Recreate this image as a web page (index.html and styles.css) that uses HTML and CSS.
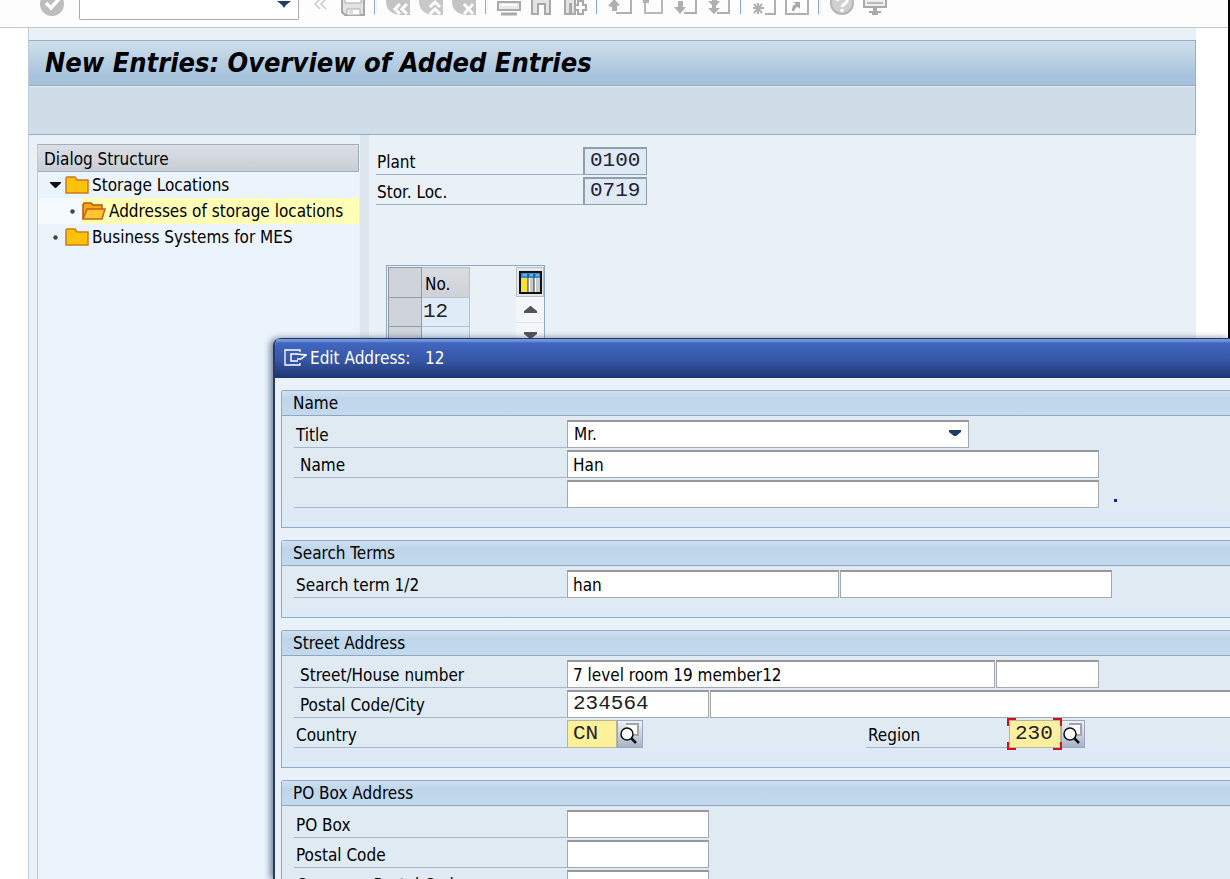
FILE: index.html
```html
<!DOCTYPE html>
<html lang="en">
<head>
<meta charset="utf-8">
<title>New Entries: Overview of Added Entries</title>
<link rel="stylesheet" href="styles.css">
</head>
<body>
<div class="app">
  <header class="toolbar">
    <button class="tool" aria-label="Enter"><svg width="24" height="16" viewBox="0 0 24 16"><circle cx="12" cy="4" r="12" fill="#bdbdbd"/><path d="M6 3l5 5 8-9" fill="none" stroke="#fff" stroke-width="3.5"/></svg></button>
    <div class="command">
      <input type="text" aria-label="Command">
      <svg class="command-arrow" width="14" height="8" viewBox="0 0 14 8"><path d="M0 1h14l-5 4-2 3-2-3z" fill="#1f3b68"/></svg>
    </div>
    <button class="tool tool-narrow" aria-label="Collapse"><svg width="14" height="16" viewBox="0 0 14 16"><path d="M7-1L2 4l5 5M13-1L8 4l5 5" fill="none" stroke="#c9c9c9" stroke-width="1.5"/></svg></button>
    <button class="tool" aria-label="Save"><svg width="24" height="16" viewBox="0 0 24 16"><path d="M1-5h22v20H4l-3-3z" fill="#e2e2e2" stroke="#a6a6a6" stroke-width="2"/><path d="M4-4h16v7H4z" fill="#fff" stroke="#aaa"/><path d="M6 9h13v6H6z" fill="#fff" stroke="#aaa"/><path d="M8 10h4v5H8z" fill="#ddd"/></svg></button>
    <span class="sep"></span>
    <button class="tool" aria-label="Back"><svg width="24" height="16" viewBox="0 0 24 16"><path d="M0-2h24v17h-9C7 15 0 10 0 2z" fill="#c4c4c4"/><path d="M14 4l-5 5 5 5M21 4l-5 5 5 5" fill="none" stroke="#fff" stroke-width="3"/></svg></button>
    <button class="tool" aria-label="Exit"><svg width="24" height="16" viewBox="0 0 24 16"><path d="M0-2h24v17h-9C7 15 0 10 0 2z" fill="#c8c8c8"/><path d="M11 7l5-5 5 5M11 14l5-5 5 5" fill="none" stroke="#fff" stroke-width="3"/></svg></button>
    <button class="tool" aria-label="Cancel"><svg width="24" height="16" viewBox="0 0 24 16"><path d="M0-2h24v17h-9C7 15 0 10 0 2z" fill="#c4c4c4"/><path d="M12 4l9 10M21 4l-9 10" fill="none" stroke="#fff" stroke-width="3"/></svg></button>
    <span class="sep"></span>
    <button class="tool" aria-label="Print"><svg width="24" height="16" viewBox="0 0 24 16"><path d="M1 2h22v8H1z" fill="#e8e8e8" stroke="#aaa" stroke-width="2"/><path d="M4 5h16" stroke="#fff" stroke-width="2"/><path d="M4 14h16" stroke="#aaa" stroke-width="3"/></svg></button>
    <button class="tool" aria-label="Find"><svg width="24" height="16" viewBox="0 0 24 16"><path d="M2 14V-2h18v16h-5V4H8v10z" fill="#e4e4e4" stroke="#a8a8a8" stroke-width="2"/></svg></button>
    <button class="tool" aria-label="Find next"><svg width="24" height="16" viewBox="0 0 24 16"><path d="M2 14V-2h10v16H8V4H7v10z" fill="#e4e4e4" stroke="#a8a8a8" stroke-width="2"/><path d="M15 1h5v4h3v5h-3v4h-5v-4h-3V5h3z" fill="#fff" stroke="#aaa" stroke-width="2"/></svg></button>
    <span class="sep"></span>
    <button class="tool" aria-label="First page"><svg width="24" height="16" viewBox="0 0 24 16"><path d="M23-2v15H8" fill="none" stroke="#b0b0b0" stroke-width="2"/><path d="M6-1l6 6-3 1v5H4V7L0 6z" fill="#b0b0b0"/></svg></button>
    <button class="tool" aria-label="Previous page"><svg width="24" height="16" viewBox="0 0 24 16"><path d="M4 3v10h17V-2" fill="none" stroke="#b8b8b8" stroke-width="2"/><path d="M2 0h6v3H2z" fill="#b0b0b0"/></svg></button>
    <button class="tool" aria-label="Next page"><svg width="24" height="16" viewBox="0 0 24 16"><path d="M22-2v15H10" fill="none" stroke="#b0b0b0" stroke-width="2"/><path d="M4 1h5v6h3l-6 7-6-7h4z" fill="#b0b0b0"/></svg></button>
    <button class="tool" aria-label="Last page"><svg width="24" height="16" viewBox="0 0 24 16"><path d="M22-2v15H10" fill="none" stroke="#b0b0b0" stroke-width="2"/><path d="M5-2h5v3h3L9 6v2h4l-6 6-6-6h4V5L1 1h4z" fill="#b0b0b0"/></svg></button>
    <span class="sep"></span>
    <button class="tool" aria-label="New session"><svg width="24" height="16" viewBox="0 0 24 16"><path d="M23-2v16H13" fill="none" stroke="#b0b0b0" stroke-width="2"/><path d="M6 3v11M1 8h11M2 4l8 9M10 4l-8 9" stroke="#b0b0b0" stroke-width="2"/></svg></button>
    <button class="tool" aria-label="Shortcut"><svg width="24" height="16" viewBox="0 0 24 16"><path d="M1-2v16h22V-2" fill="none" stroke="#b0b0b0" stroke-width="2"/><path d="M7 11c0-4 1-6 4-7L8 2h7v7l-2-2c-2 0-3 2-4 4z" fill="#a8a8a8"/></svg></button>
    <span class="sep"></span>
    <button class="tool" aria-label="Help"><svg width="24" height="16" viewBox="0 0 24 16"><circle cx="12" cy="3" r="11" fill="#d0d0d0" stroke="#b4b4b4" stroke-width="2"/><path d="M7 1c2-5 10-4 10 0 0 3-5 3-5 6M12 9v3" fill="none" stroke="#fff" stroke-width="3"/></svg></button>
    <button class="tool" aria-label="Customize layout"><svg width="24" height="16" viewBox="0 0 24 16"><path d="M1-2v9h22v-9" fill="#eee" stroke="#aaa" stroke-width="2"/><path d="M4 3h16" stroke="#bbb" stroke-width="2"/><path d="M10 8h4v3h4v2h-3v2H9v-2H6v-2h4z" fill="#aaa"/></svg></button>
  </header>

  <main class="screen">
    <div class="title-area">
      <h1>New Entries: Overview of Added Entries</h1>
      <div class="app-toolbar"></div>
    </div>
    <div class="work">
      <nav class="tree">
        <h2>Dialog Structure</h2>
        <ul>
          <li class="node">
            <svg class="mark" width="11" height="6" viewBox="0 0 11 6"><path d="M0 0h11v1L6 6H5L0 1z" fill="#111"/></svg>
            <svg width="24" height="19" viewBox="0 0 24 19"><path d="M1 17V2l1-1h8l2 3h11v13z" fill="#ffc20a" stroke="#c97a1c" stroke-width="1.5"/></svg>
            <span>Storage Locations</span>
          </li>
          <li class="node node-child">
            <svg class="mark" width="5" height="5" viewBox="0 0 5 5"><circle cx="2.5" cy="2.5" r="2.2" fill="#444"/></svg>
            <span class="selected">
              <svg width="24" height="19" viewBox="0 0 24 19"><path d="M1 17V3l1-2h7l2 2h9v4" fill="#f9a61c" stroke="#b5541c" stroke-width="1.5"/><path d="M1 17L5 7h18l-3 10z" fill="#ffc62c" stroke="#c0601c" stroke-width="1.5"/></svg>
              <span>Addresses of storage locations</span>
            </span>
          </li>
          <li class="node">
            <svg class="mark" width="11" height="5" viewBox="0 0 11 5"><circle cx="5.5" cy="2.5" r="2.2" fill="#444"/></svg>
            <svg width="24" height="19" viewBox="0 0 24 19"><path d="M1 17V2l1-1h8l2 3h11v13z" fill="#ffc20a" stroke="#c97a1c" stroke-width="1.5"/></svg>
            <span>Business Systems for MES</span>
          </li>
        </ul>
      </nav>
      <div class="splitter"></div>
      <section class="detail">
        <div class="key-row"><label for="plant">Plant</label><input id="plant" class="field mono readonly" value="0100" readonly></div>
        <div class="key-row"><label for="sloc">Stor. Loc.</label><input id="sloc" class="field mono readonly" value="0719" readonly></div>
        <div class="grid-box">
          <table class="grid">
            <tr><th class="pick"></th><th>No.</th></tr>
            <tr><td class="pick"></td><td class="num">12</td></tr>
            <tr><td class="pick"></td><td class="num"></td></tr>
          </table>
          <div class="grid-side">
            <button class="config" aria-label="Table settings"><svg width="23" height="23" viewBox="0 0 23 23"><path d="M1 1h21v21H1z" fill="#fff" stroke="#111" stroke-width="2"/><path d="M2 2h19v5H2z" fill="#2f8fd0"/><path d="M2 7h7v14H2z" fill="#f6e13a"/><path d="M11 7h4v14h-4zM17 7h4v14h-4z" fill="#c4ccd2"/><path d="M9 3v18M15 3v18" stroke="#333"/><path d="M4 4h4M11 4h3M17 4h3" stroke="#9ad4f5"/></svg></button>
            <button class="scroll" aria-label="Scroll up"><svg width="13" height="7" viewBox="0 0 13 7"><path d="M0 7V5l5-4 1-1h1l1 1 5 4v2z" fill="#555"/></svg></button>
            <button class="scroll" aria-label="Scroll down"><svg width="13" height="7" viewBox="0 0 13 7"><path d="M0 0v2l5 4 1 1h1l1-1 5-4V0z" fill="#555"/></svg></button>
          </div>
        </div>
      </section>
    </div>
  </main>

  <section class="dialog" role="dialog" aria-labelledby="dlg-title">
    <div class="dialog-title">
      <svg width="23" height="17" viewBox="0 0 23 17"><path d="M16 3V1H1v15h15v-2" fill="none" stroke="#fff" stroke-width="1.3"/><path d="M14 5H7v7h7M12 5l10 1-5 4h-4" fill="none" stroke="#fff" stroke-width="1.5"/></svg>
      <h2 id="dlg-title">Edit Address:&nbsp;  12</h2>
    </div>
    <div class="dialog-body">
      <fieldset class="group">
        <legend>Name</legend>
        <div class="row"><label for="title">Title</label>
          <div class="select-wrap w-title"><select id="title" class="field"><option>Mr.</option></select>
          <svg class="select-arrow" width="12" height="7" viewBox="0 0 12 7"><path d="M0 0h12v2L7 6H5L0 2z" fill="#1f3b68"/></svg></div></div>
        <div class="row"><label for="name1" class="indent">Name</label><input id="name1" class="field w-name" value="Han"></div>
        <div class="row"><label for="name2" aria-label="Name 2"></label><input id="name2" class="field w-name"><span class="dot"></span></div>
      </fieldset>
      <fieldset class="group">
        <legend>Search Terms</legend>
        <div class="row"><label for="term1">Search term 1/2</label><input id="term1" class="field w-term" value="han"><input class="field w-term" aria-label="Search term 2"></div>
      </fieldset>
      <fieldset class="group">
        <legend>Street Address</legend>
        <div class="row"><label for="street" class="indent">Street/House number</label><input id="street" class="field w-street" value="7 level room 19 member12"><input class="field w-house" aria-label="House number"></div>
        <div class="row"><label for="postal" class="indent">Postal Code/City</label><input id="postal" class="field mono w-postal" value="234564"><input class="field grow" aria-label="City"></div>
        <div class="row"><label for="country">Country</label>
          <div class="lookup"><input id="country" class="field mono key" value="CN"><button class="find" aria-label="Find country"><svg width="22" height="22" viewBox="0 0 22 22"><path d="M7 1h12v11h-5" fill="#fff" stroke="#a4a4a4" stroke-width="2"/><circle cx="8" cy="11" r="6" fill="#fff" stroke="#111" stroke-width="1.5"/><path d="M12 15l5 5" stroke="#111" stroke-width="2.5"/></svg></button></div>
          <label for="region" class="region-label">Region</label>
          <div class="lookup focus"><input id="region" class="field mono key" value="230"><button class="find" aria-label="Find region"><svg width="22" height="22" viewBox="0 0 22 22"><path d="M7 1h12v11h-5" fill="#fff" stroke="#a4a4a4" stroke-width="2"/><circle cx="8" cy="11" r="6" fill="#fff" stroke="#111" stroke-width="1.5"/><path d="M12 15l5 5" stroke="#111" stroke-width="2.5"/></svg></button>
          <svg class="focus-frame" width="55" height="32" viewBox="0 0 55 32"><path d="M1 8V1h8M46 1h8v7M54 24v7h-8M9 31H1v-7" fill="none" stroke="#d0101c" stroke-width="2"/></svg></div>
        </div>
      </fieldset>
      <fieldset class="group">
        <legend>PO Box Address</legend>
        <div class="row"><label for="pobox">PO Box</label><input id="pobox" class="field w-postal"></div>
        <div class="row"><label for="popostal">Postal Code</label><input id="popostal" class="field w-postal"></div>
        <div class="row"><label for="company">Company Postal Code</label><input id="company" class="field w-postal"></div>
      </fieldset>
    </div>
  </section>
</div>
</body>
</html>
```
FILE: styles.css
```css
* { box-sizing: border-box; }
body {
  margin: 0;
  font-family: "DejaVu Sans Condensed", "Noto Sans", sans-serif;
  font-size: 17px;
  line-height: 24px;
  color: #000;
  background: #fff;
}
h1, h2, ul, fieldset { margin: 0; padding: 0; }
button, input, select { font: inherit; color: inherit; border-radius: 0; margin: 0; }
svg { display: block; flex: none; }
.app {
  position: relative;
  display: flex;
  flex-direction: column;
  height: 100vh;
  overflow: hidden;
  background: linear-gradient(to left, #000 2px, #fff 2px);
}
.toolbar {
  display: flex;
  align-items: flex-start;
  gap: 9px;
  height: 28px;
  margin-right: 2px;
  padding-left: 40px;
  border-bottom: 1px solid #c6c6c6;
  background: #fdfdfd;
  flex: none;
}
.tool { display: block; width: 24px; padding: 0; border: 0; background: none; overflow: hidden; }
.tool-narrow { width: 14px; margin: 0 5px; }
.command { position: relative; width: 220px; margin-left: 6px; }
.command input {
  display: block;
  width: 100%;
  height: 20px;
  border: 1px solid #aaa;
  border-top: 0;
  border-radius: 0 0 2px 2px;
  background: #fff;
}
.command-arrow { position: absolute; right: 8px; top: 0; }
.sep { width: 3px; height: 14px; border-left: 1px solid #8aa9cc; border-right: 1px solid #f0f4f8; }
.screen {
  flex: 1;
  display: flex;
  flex-direction: column;
  margin: 0 34px 0 28px;
  padding-top: 12px;
  background: #e9f1f7;
  border-left: 1px solid #bccedd;
}
.title-area { border: 1px solid #93aec6; border-left: 0; background: #cfdde9; flex: none; }
h1 {
  padding: 6px 16px 6px;
  font-size: 27px;
  line-height: 32px;
  font-style: italic;
  font-weight: bold;
  background: linear-gradient(#cfdfea, #a7c3dc 80%, #a9c2da);
  border-bottom: 1px solid #93aec6;
  white-space: nowrap;
}
.app-toolbar { height: 48px; border-top: 1px solid #e2edf5; }
.work { display: flex; flex: 1; }
.tree { width: 322px; margin: 9px 1px 0 8px; background: #ebf4fc; border-left: 1px solid #b9cbdb; }
.tree h2 {
  height: 28px;
  padding: 2px 6px;
  font-size: 17px;
  font-weight: normal;
  background: linear-gradient(#dcdfe5, #c9cdd5);
  border: 1px solid #a3aebb;
  border-left: 0;
}
.tree ul { list-style: none; }
.node { display: flex; align-items: center; gap: 3px; height: 26px; padding-left: 12px; white-space: nowrap; }
.mark { margin-right: 1px; }
.node-child { height: 26px; padding-left: 32px; background: #f5faff; }
.selected { display: flex; align-items: center; gap: 3px; flex: 1; height: 26px; padding-left: 3px; background: linear-gradient(90deg, #f5faff 3px, #ffffb5 3px); }
.splitter { width: 9px; background: #dde6ec; }
.detail { flex: 1; padding: 12px 0 0 7px; }
.key-row { display: flex; width: 271px; margin-bottom: 2px; }
.key-row label { flex: 1; height: 28px; padding: 3px 1px; border-bottom: 1px solid #9fb0c2; }
.key-row .field { width: 64px; }
.field {
  height: 28px;
  padding: 0 5px;
  border: 1px solid #a3a9b0;
  border-top: 2px solid #98989c;
  background: #fff;
  outline: 0;
}
.mono { font-family: "Liberation Mono", monospace; font-size: 21px; padding-bottom: 3px; color: #222; }
.readonly { background: #dfeaf5; border: 2px solid #8f9db0; border-right-width: 1px; border-bottom-width: 1px; color: #223; }
.grid-box {
  display: flex;
  justify-content: space-between;
  width: 159px;
  margin: 60px 0 0 10px;
  padding: 1px 0 1px 1px;
  border: 1px solid #8fa9c4;
}
.grid { border-collapse: collapse; }
.grid th, .grid td { width: 48px; height: 29px; padding: 0 3px; border: 1px solid #b4c2d2; text-align: left; font-weight: normal; }
.grid th { height: 30px; padding-top: 2px; background: linear-gradient(#d9dce0, #ced2d8); }
.grid .pick { width: 33px; background: #cfd4db; border-color: #8e9bab; }
.grid .num { padding: 0 1px; background: #dfebf6; color: #222; font-family: "Liberation Mono", monospace; font-size: 21px; }
.grid-side { display: flex; flex-direction: column; width: 28px; }
.grid-side button { display: flex; align-items: center; justify-content: center; height: 26px; padding: 0; border: 0; border-bottom: 1px solid #dfe7ee; background: #f4f7fa; }
.grid-side .config { height: 30px; border: 1px solid #b8c0c8; background: #e4e6e8; }
.dialog {
  position: absolute;
  left: 273px;
  top: 338px;
  right: 0;
  bottom: 0;
  overflow: hidden;
  border-left: 2px solid #27396a;
  border-radius: 8px 0 0 0;
  background: #e9f2f8;
  box-shadow: -3px 0 6px rgba(40, 60, 90, 0.6);
}
.dialog-title {
  display: flex;
  align-items: center;
  gap: 3px;
  height: 40px;
  padding: 0 0 2px 9px;
  color: #fff;
  background: linear-gradient(#7295da 2px, #4066bf 4px, #3656a5 55%, #1c3670);
  border-top: 1px solid #22386f;
}
.dialog-title h2 { font-size: 17px; font-weight: normal; white-space: pre; }
.dialog-body { display: flex; flex-direction: column; gap: 12px; padding: 12px 0 0 6px; }
.group {
  display: flex;
  flex-direction: column;
  gap: 2px;
  min-width: 0;
  padding-bottom: 19px;
  border: 1px solid #93abc6;
  border-right: 0;
  border-radius: 3px 0 0 0;
  background: linear-gradient(#dfeaf3 80%, #dce9f7);
}
.group legend {
  float: left;
  width: 100%;
  height: 25px;
  margin-bottom: 2px;
  padding: 0 11px;
  background: linear-gradient(#cfe0f0, #bfd6ea 30%, #c3d9ee);
  border-bottom: 1px solid #8fa8c0;
}
.row { display: flex; gap: 1px; padding-left: 12px; height: 28px; }
.row > label { width: 273px; margin-right: -1px; padding: 3px 2px; height: 28px; border-bottom: 1px solid #a5b6ca; flex: none; }
.row > label.indent { padding-left: 6px; }
.row .field { flex: none; }
.select-wrap { position: relative; }
.select-wrap select { appearance: none; width: 100%; padding-left: 6px; padding-bottom: 2px; }
.select-arrow { position: absolute; right: 8px; top: 10px; pointer-events: none; }
.w-title { width: 402px; }
.w-name { width: 532px; }
.w-term { width: 272px; }
.w-street { width: 428px; }
.w-house { width: 103px; }
.w-postal { width: 142px; }
.row .grow { flex: 1; border-right: 0; min-width: 0; }
.dot { width: 3px; height: 3px; margin: 19px 0 0 14px; background: #1a1ac0; }
.lookup { position: relative; display: flex; width: 76px; }
.lookup .key { width: 50px; padding-bottom: 1px; background: #fff09c; border: 1px solid #b5b59c; }
.find { display: flex; align-items: center; justify-content: center; width: 26px; height: 28px; padding: 0; border: 1px solid #9ea8bc; background: linear-gradient(#eef1f6, #a9b4ca); }
.row > .region-label { width: 143px; margin-left: 222px; }
.focus .key { width: 52px; background: #fff0a0; }
.focus .find { width: 24px; }
.focus-frame { position: absolute; left: -2px; top: -2px; pointer-events: none; }
```
